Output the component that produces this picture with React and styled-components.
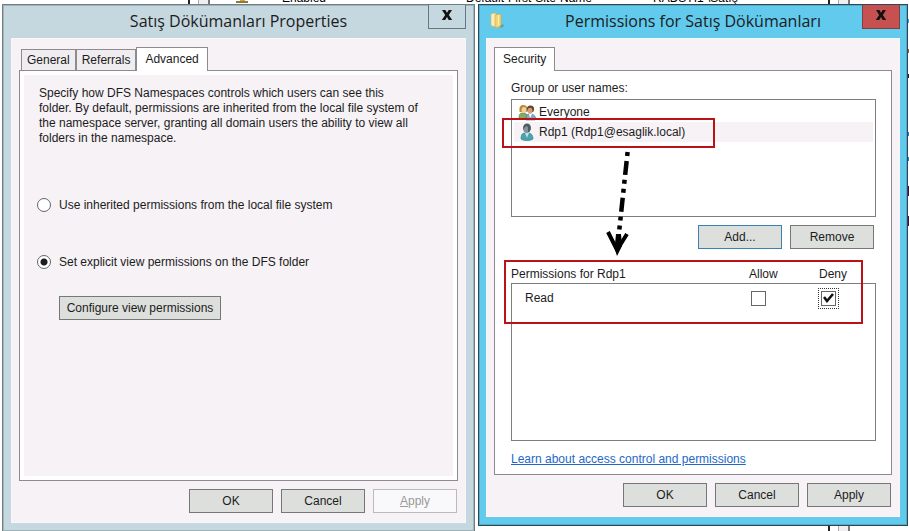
import styled, { createGlobalStyle } from "styled-components";

const App = () => {
  return (
    <>
      <GlobalStyle />
      <Desktop>
        <Backdrop aria-hidden="true">
          <Gutter />
          <Cell>
            <ServerMark />
            Enabled
          </Cell>
          <Cell>Default-First-Site-Name</Cell>
          <Cell>RADSTI1 \Satış</Cell>
          <Gutter />
          <EdgeColumn>
            <Speck $gap={19} $color="#3d9fd0" />
            <Speck $gap={26} $color="#8a6233" />
            <Speck $gap={21} $color="#222" />
            <Speck $gap={54} $color="#2c7da0" />
            <Speck $gap={21} $color="#2c7da0" />
            <Speck $gap={25} $color="#3a1230" $tall />
            <Speck $gap={20} $color="#3a1230" $tall />
          </EdgeColumn>
        </Backdrop>

        <Windows>
          <PropertiesWindow />
          <PermissionsWindow />
        </Windows>
      </Desktop>
    </>
  );
};

const PropertiesWindow = () => (
  <Window $bg="#c5d7df" $border="#6f7f84" $side={8}>
    <TitleBar>
      <Title>Satış Dökümanları Properties</Title>
      <CloseButton aria-label="Close" $bg="#c5d7df" $border="#67777c">
        <CloseMark />
      </CloseButton>
    </TitleBar>
    <Client>
      <Tabs role="tablist" $indent>
        <Tab role="tab" aria-selected="false">General</Tab>
        <Tab role="tab" aria-selected="false">Referrals</Tab>
        <Tab role="tab" aria-selected="true" $active>Advanced</Tab>
      </Tabs>
      <AdvancedPanel>
        <Description>
          Specify how DFS Namespaces controls which users can see this
          <br />
          folder. By default, permissions are inherited from the local file system of
          <br />
          the namespace server, granting all domain users the ability to view all
          <br />
          folders in the namespace.
        </Description>
        <Options>
          <Option>
            <Radio type="radio" name="mode" />
            Use inherited permissions from the local file system
          </Option>
          <Option>
            <Radio type="radio" name="mode" defaultChecked />
            Set explicit view permissions on the DFS folder
          </Option>
        </Options>
        <ConfigureButton>Configure view permissions</ConfigureButton>
      </AdvancedPanel>
      <ButtonRow>
        <Button>OK</Button>
        <Button>Cancel</Button>
        <Button disabled>
          <u>A</u>pply
        </Button>
      </ButtonRow>
    </Client>
  </Window>
);

const PermissionsWindow = () => (
  <Window $bg="#62caec" $border="#2b4a56" $side={7}>
    <TitleBar>
      <FolderIcon />
      <Title>Permissions for Satış Dökümanları</Title>
      <CloseButton aria-label="Close" $bg="#c75050" $border="#7c4142">
        <CloseMark />
      </CloseButton>
    </TitleBar>
    <Client>
      <Tabs role="tablist">
        <Tab role="tab" aria-selected="true" $active>Security</Tab>
      </Tabs>
      <SecurityPanel>
        <Label id="users-label">Group or user names:</Label>
        <UserList role="listbox" aria-labelledby="users-label">
          <User role="option" aria-selected="false">
            <GroupIcon />
            Everyone
          </User>
          <User role="option" aria-selected="true" $selected>
            <UserIcon />
            Rdp1 (Rdp1@esaglik.local)
            <UserHighlight />
            <Arrow />
          </User>
        </UserList>
        <ListButtons>
          <Button $focused>Add...</Button>
          <Button>Remove</Button>
        </ListButtons>
        <PermissionArea>
          <PermissionTable>
            <thead>
              <tr>
                <th scope="col">Permissions for Rdp1</th>
                <CheckHead scope="col">Allow</CheckHead>
                <CheckHead scope="col">Deny</CheckHead>
              </tr>
            </thead>
            <tbody>
              <tr>
                <td>Read</td>
                <CheckCell>
                  <Checkbox type="checkbox" aria-label="Allow Read" />
                </CheckCell>
                <CheckCell>
                  <FocusRing>
                    <Checkbox type="checkbox" aria-label="Deny Read" defaultChecked />
                    <CheckMark />
                  </FocusRing>
                </CheckCell>
              </tr>
            </tbody>
          </PermissionTable>
          <PermissionHighlight />
        </PermissionArea>
        <Link href="#">Learn about access control and permissions</Link>
      </SecurityPanel>
      <ButtonRow>
        <Button>OK</Button>
        <Button>Cancel</Button>
        <Button>Apply</Button>
      </ButtonRow>
    </Client>
  </Window>
);

const CloseMark = () => (
  <svg width="12" height="10" viewBox="0 0 12 10" aria-hidden="true">
    <path d="M1 0h3.4L6 2.8 7.7 0H11L7.8 4.9 11.2 10H7.7L6 7 4.2 10H.8l3.4-5.1z" fill="#111" />
  </svg>
);

const FolderIcon = () => (
  <svg width="16" height="18" viewBox="0 0 16 18" aria-hidden="true">
    <path d="M2 2l4-1 1 1v13l-4-1-1-1z" fill="#f9edb8" stroke="#d9b850" strokeWidth=".6" />
    <path d="M6 3l5-1 1 1v11l-5 2-1-1z" fill="#f2d571" stroke="#cfa83f" strokeWidth=".6" />
    <path d="M9 3h1v10l-1 1z" fill="#fff3bd" />
    <path d="M11 14l3-2 1 2-3 2z" fill="#6f96a8" />
  </svg>
);

const GroupIcon = () => (
  <svg width="19" height="17" viewBox="0 0 19 17" aria-hidden="true">
    <path d="M1 14c0-4 1-5 4-5s4 1 5 4l-2 2H2z" fill="#85ab63" stroke="#5c7a47" strokeWidth=".6" />
    <path d="M1.6 8C1 3 2 1 5.5 1S10 4 9 8z" fill="#b98b35" />
    <ellipse cx="6" cy="6" rx="2.4" ry="3" fill="#f1cf9c" />
    <path d="M8 16c0-5 1-6 4-6s5 1 6 5l-1 1z" fill="#7ea9c8" stroke="#4b7291" strokeWidth=".6" />
    <path d="M11 10l1 4 2-4z" fill="#fff" />
    <circle cx="12.5" cy="5" r="3.6" fill="#66432e" />
    <ellipse cx="12" cy="6.6" rx="2.4" ry="2.8" fill="#d99d74" />
  </svg>
);

const UserIcon = () => (
  <svg width="19" height="18" viewBox="0 0 19 18" aria-hidden="true">
    <path d="M3 16c0-4 1-6 4-6h3c3 0 5 2 5 6-3 2-9 2-12 0z" fill="#4ba3ad" stroke="#327985" strokeWidth=".6" />
    <path d="M7 10l2 5 2-5z" fill="#bfe2e3" />
    <ellipse cx="9" cy="5" rx="4" ry="4.6" fill="#4d5d67" />
    <path d="M6 5c2-1 2-2 2-2l2 1v5L8 10 6 8z" fill="#84939c" />
  </svg>
);

const Arrow = () => (
  <ArrowSvg width="34" height="110" viewBox="0 0 34 110" aria-hidden="true">
    <path d="M22.6 2L13 92" fill="none" stroke="#000" strokeWidth="4.5" strokeDasharray="4 5 14 5 4 5" />
    <path d="M3 82l9 18 10-16" fill="none" stroke="#000" strokeWidth="4" />
    <path d="M11 84l-1 10-1 2 3 10 5-10-1-12z" fill="#000" />
  </ArrowSvg>
);

const CheckMark = () => (
  <CheckSvg width="11" height="10" viewBox="0 0 11 10" aria-hidden="true">
    <path d="M1 4l3 4 6-7" fill="none" stroke="#111" strokeWidth="2.6" />
  </CheckSvg>
);

export default App;

const GlobalStyle = createGlobalStyle`
  * {
    box-sizing: border-box;
  }

  body {
    margin: 0;
    background: #fff;
    color: #1c1c1c;
    font-family: "Liberation Sans", Arial, sans-serif;
    font-size: 12px;
    line-height: 15px;
    overflow: hidden;
  }

  button {
    font: inherit;
    color: inherit;
  }
`;

const Desktop = styled.main`
  display: grid;
  min-height: 100vh;

  > * {
    grid-area: 1 / 1;
  }
`;

const Backdrop = styled.div`
  display: grid;
  grid-template-columns: 22px 256px 187px 1fr 22px 59px;
  padding-left: 188px;
`;

const Cell = styled.div`
  display: flex;
  gap: 34px;
  height: 15px;
  margin-top: -9px;
  white-space: nowrap;
  color: #000;

  &:nth-child(2) {
    padding-left: 26px;
  }
`;

const ServerMark = styled.i`
  width: 12px;
  height: 12px;
  background: linear-gradient(90deg, transparent 4px, #d9a520 4px, #d9a520 9px, transparent 9px);
  border-bottom: 2px solid #8f7a45;
`;

const Gutter = styled.div`
  border-left: 2px solid #222;
  border-right: 2px solid #777;
  background: linear-gradient(90deg, #fff 8px, #aaa 8px, #aaa 9px, #f1eef2 9px);
`;

const EdgeColumn = styled.div`
  display: flex;
  flex-direction: column;
  align-items: flex-end;
`;

const Speck = styled.i`
  width: 3px;
  height: ${({ $tall }) => ($tall ? 10 : 4)}px;
  margin-top: ${({ $gap }) => $gap}px;
  background: ${({ $color }) => $color};
`;

const Windows = styled.div`
  display: grid;
  grid-template-columns: 473fr 430fr;
  align-items: start;
  gap: 3px;
  padding: 4px 1px 0 2px;
`;

const Window = styled.section`
  min-width: 0;
  padding: 0 ${({ $side }) => $side}px 8px;
  background: ${({ $bg }) => $bg};
  border: 1px solid ${({ $border }) => $border};
  box-shadow: inset 0 0 0 1px rgba(50, 70, 78, 0.25);
`;

const TitleBar = styled.header`
  display: grid;
  grid-template-columns: 38px 1fr 38px;
  align-items: start;
  height: 33px;

  > svg {
    margin: 7px 0 0 3px;
  }
`;

const Title = styled.h1`
  grid-column: 2;
  margin: 0;
  font-family: "Open Sans", "Noto Sans", sans-serif;
  font-size: 16px;
  font-weight: 400;
  line-height: 32px;
  text-align: center;
  white-space: nowrap;
`;

const CloseButton = styled.button`
  height: 24px;
  padding: 0;
  background: ${({ $bg }) => $bg};
  border: 1px solid ${({ $border }) => $border};
  border-top: 0;
`;

const Client = styled.div`
  padding: 8px 7px 9px;
  background: #f6f2f6;
  border: 1px solid rgba(255, 255, 255, 0.4);
`;

const Tabs = styled.div`
  display: flex;
  align-items: flex-end;
  height: 23px;
  padding-left: ${({ $indent }) => ($indent ? 2 : 0)}px;
`;

const Tab = styled.button`
  position: relative;
  height: ${({ $active }) => ($active ? 24 : 21)}px;
  margin: 0 0 ${({ $active }) => ($active ? -1 : 0)}px;
  padding: 0 ${({ $active }) => ($active ? 8 : 5)}px;
  background: ${({ $active }) => ($active ? "#fff" : "#f0edf1")};
  border: 1px solid #8e8b90;
  border-bottom: 0;

  & + & {
    border-left-width: ${({ $active }) => ($active ? 1 : 0)}px;
  }
`;

const Panel = styled.div`
  border: 1px solid #8e8b90;
`;

const AdvancedPanel = styled(Panel)`
  height: 411px;
  padding: 15px 16px 0;
  box-shadow: inset 0 0 0 4px #fff;
`;

const SecurityPanel = styled(Panel)`
  padding: 9px 15px 7px 16px;
  background: #fff;
`;

const Description = styled.p`
  margin: 0 0 0 3px;
  white-space: nowrap;
`;

const Options = styled.div`
  display: grid;
  gap: 41px;
  margin-top: 51px;
`;

const Option = styled.label`
  display: flex;
  align-items: center;
  gap: 8px;
  height: 16px;
  white-space: nowrap;
`;

const Radio = styled.input`
  appearance: none;
  width: 14px;
  height: 14px;
  margin: 0 0 0 1px;
  background: #fff;
  border: 1px solid #666;
  border-radius: 50%;

  &:checked {
    background: radial-gradient(circle, #1c1c1c 3px, #fff 4px);
  }
`;

const Button = styled.button`
  width: 84px;
  height: 24px;
  padding: 0;
  background: #dddfdd;
  border: 1px solid ${({ $focused }) => ($focused ? "#3c7fb1" : "#777")};
  white-space: nowrap;

  &:disabled {
    background: #f9f8fa;
    border-color: #bbb;
    color: #999;
  }
`;

const ConfigureButton = styled(Button)`
  width: 162px;
  margin: 26px 0 0 23px;
`;

const ButtonRow = styled.div`
  display: flex;
  justify-content: flex-end;
  gap: 8px;
  margin-top: 8px;
  padding-right: 1px;
`;

const Label = styled.div`
  line-height: 16px;
`;

const UserList = styled.div`
  height: 118px;
  margin-top: 3px;
  padding: 2px;
  border: 1px solid #7d7d80;
`;

const User = styled.div`
  position: relative;
  display: flex;
  align-items: center;
  gap: 2px;
  height: 20px;
  padding-left: 4px;
  background: ${({ $selected }) => ($selected ? "#f6f2f6" : "transparent")};
`;

const Highlight = styled.div`
  position: absolute;
  border: 2px solid #b91319;
  pointer-events: none;
`;

const UserHighlight = styled(Highlight)`
  top: -4px;
  left: -12px;
  width: 213px;
  height: 30px;
`;

const ArrowSvg = styled.svg`
  position: absolute;
  top: 28px;
  left: 91px;
`;

const ListButtons = styled.div`
  display: flex;
  justify-content: flex-end;
  gap: 8px;
  margin: 8px 2px 0 0;
`;

const PermissionArea = styled.div`
  position: relative;
  display: grid;
  height: 192px;
  padding-top: 16px;

  &::before {
    content: "";
    grid-area: 1 / 1;
    margin-top: 18px;
    border: 1px solid #7d7d80;
  }
`;

const PermissionTable = styled.table`
  grid-area: 1 / 1;
  align-self: start;
  width: 100%;
  border-collapse: collapse;
  table-layout: fixed;

  th {
    height: 19px;
    padding: 0;
    font-weight: 400;
    text-align: left;
  }

  td {
    height: 28px;
    padding: 0 0 0 14px;
  }
`;

const CheckHead = styled.th`
  width: 70px;

  &:last-child {
    width: 57px;
  }
`;

const CheckCell = styled.td`
  && {
    padding: 0 0 0 2px;
  }
`;

const Checkbox = styled.input`
  appearance: none;
  display: block;
  width: 15px;
  height: 15px;
  margin: 0;
  background: #fff;
  border: 1px solid #666;
`;

const FocusRing = styled.span`
  position: relative;
  display: inline-grid;
  place-items: center;
  width: 21px;
  height: 21px;
  margin-left: -3px;
  border: 1px dotted #333;
  vertical-align: middle;
`;

const CheckSvg = styled.svg`
  position: absolute;
  pointer-events: none;
`;

const PermissionHighlight = styled(Highlight)`
  top: 11px;
  left: -7px;
  right: 13px;
  height: 64px;
`;

const Link = styled.a`
  display: inline-block;
  margin-top: 11px;
  color: #2268c8;
`;
